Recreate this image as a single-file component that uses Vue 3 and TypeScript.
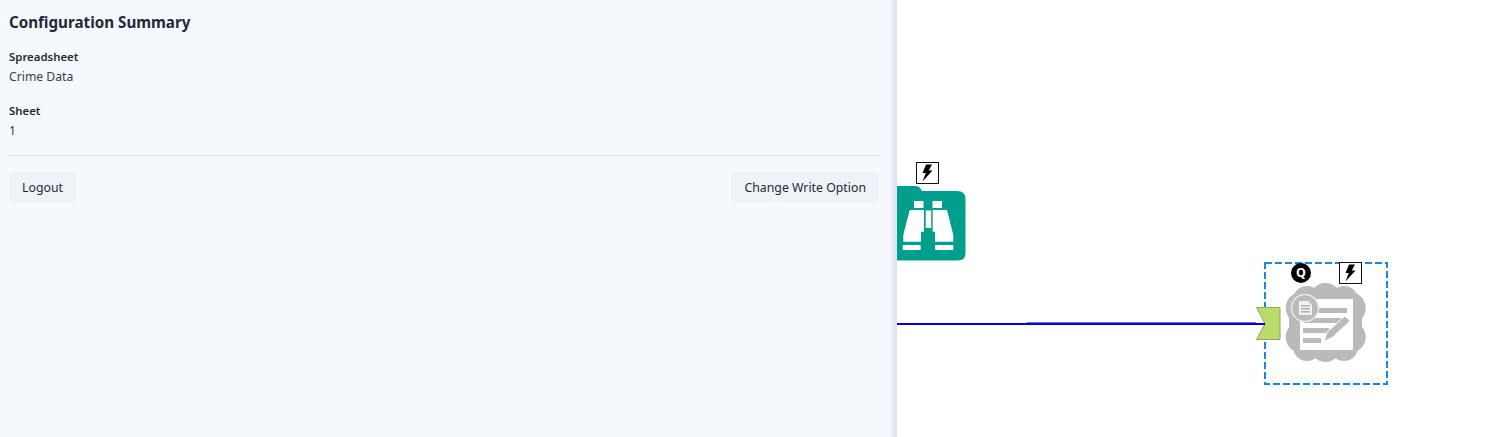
<script setup lang="ts">
const fields: { label: string; value: string }[] = [
  { label: 'Spreadsheet', value: 'Crime Data' },
  { label: 'Sheet', value: '1' },
]
</script>

<template>
  <div class="page">
    <aside class="panel">
      <h1 class="title">Configuration Summary</h1>
      <div v-for="f in fields" :key="f.label" class="field">
        <div class="label">{{ f.label }}</div>
        <div class="value">{{ f.value }}</div>
      </div>
      <hr class="rule" />
      <div class="actions">
        <button class="btn">Logout</button>
        <button class="btn">Change Write Option</button>
      </div>
    </aside>
    <div class="splitter"></div>
    <main class="canvas">
      <div class="bolt-box bolt-a">
        <svg viewBox="0 0 20 20" width="20" height="20"><path d="M9 1.500H15L11.800 7.500H15.500L5.500 18.500 8.800 10H5.500Z" fill="#000" /></svg>
      </div>

      <svg class="tool-browse" width="69" height="76" viewBox="0 0 69 76">
        <path d="M0 1H19Q22 1 23.500 3.500L25 6H60Q68.500 6 68.500 14V68Q68.500 75.500 61 75.500H0Z" fill="#009e8c" />
        <g fill="#fff">
          <rect x="17" y="16" width="9.500" height="7" />
          <rect x="35.500" y="16" width="9.500" height="7" />
          <rect x="28.700" y="25.500" width="5.500" height="17.500" />
          <path d="M12.700 25H27V46.700H24V56.700H6.300V50Z" />
          <path d="M35.700 25H50L56.300 50V56.700H38V46.700H35.700Z" />
          <rect x="5.700" y="60" width="18" height="5" rx="1" />
          <rect x="38" y="60" width="18.300" height="5" rx="1" />
        </g>
      </svg>

      <svg class="selection" width="124" height="124" viewBox="0 0 124 124">
        <rect x="1" y="1" width="122" height="121" fill="none" stroke="#1b87e0" stroke-width="2" stroke-dasharray="7 3" />
      </svg>
      <div class="q-badge">Q</div>
      <div class="bolt-box bolt-b">
        <svg viewBox="0 0 20 20" width="20" height="20"><path d="M9 1.500H15L11.800 7.500H15.500L5.500 18.500 8.800 10H5.500Z" fill="#000" /></svg>
      </div>

      <svg class="anchor" width="27" height="35" viewBox="0 0 27 35">
        <path d="M1.500 1.500H25V33.500H1.500L10 17.500Z" fill="#bcdb6a" stroke="#8fa860" stroke-width="1" stroke-linejoin="round" />
      </svg>

      <svg class="wires" width="594" height="437">
        <path d="M0 324H368" stroke="#0000e6" stroke-width="2" fill="none" />
        <path d="M130 322.500H359" stroke="#7070f0" stroke-width="1" fill="none" />
      </svg>

      <svg class="tool-cloud" width="84" height="82" viewBox="0 0 84 82">
        <g fill="#bababa">
          <circle cx="42.500" cy="17" r="16" />
          <circle cx="24" cy="18" r="14" />
          <circle cx="61" cy="18" r="14" />
          <circle cx="18.700" cy="26" r="16" />
          <circle cx="66.700" cy="26" r="16" />
          <circle cx="18.700" cy="55" r="16" />
          <circle cx="66.700" cy="55" r="16" />
          <circle cx="24" cy="65" r="14" />
          <circle cx="61" cy="65" r="14" />
          <circle cx="42.500" cy="64" r="16" />
          <rect x="6" y="15" width="73" height="50" />
        </g>
        <rect x="17" y="17" width="53" height="51" fill="#fff" />
        <g fill="#bababa">
          <rect x="32" y="26" width="32" height="5" />
          <rect x="21" y="36" width="40" height="5" />
          <rect x="20" y="46" width="26" height="5" />
          <rect x="20" y="56" width="18" height="5" />
          <path d="M41 59.500 44 50 62 34 67 39 50 55Z" stroke="#fff" stroke-width="1" />
        </g>
        <circle cx="22" cy="26" r="13.500" fill="#bababa" stroke="#e8e8e8" stroke-width="1.500" />
        <path d="M16 19H25L29 23V33H16Z" fill="#f0f0f0" />
        <g fill="#b0b0b0">
          <rect x="18" y="23" width="9" height="1.500" />
          <rect x="18" y="26" width="9" height="1.500" />
          <rect x="18" y="29" width="9" height="1.500" />
        </g>
      </svg>
    </main>
  </div>
</template>

<style scoped>
.page {
  display: flex;
  width: 1491px;
  height: 437px;
  overflow: hidden;
  background: #fff;
  font-family: "Noto Sans", "Open Sans", sans-serif;
  color: #1f2937;
}
.panel {
  width: 891px;
  flex: none;
  box-sizing: border-box;
  padding: 12px 12px 0 9px;
  background: #f5f8fd;
}
.title {
  margin: 0 0 16px;
  font-size: 15.200px;
  line-height: 20px;
  font-weight: 700;
  color: #1f2a37;
}
.field + .field {
  margin-top: 15px;
}
.label {
  font-size: 11.400px;
  line-height: 18px;
  font-weight: 600;
  color: #1f2a37;
}
.value {
  margin-top: 1px;
  font-size: 12.200px;
  line-height: 20px;
  color: #374151;
}
.rule {
  margin: 14px 0 16px;
  border: 0;
  border-top: 1px solid #e2e6ee;
}
.actions {
  display: flex;
  justify-content: space-between;
}
.btn {
  height: 30px;
  padding: 0 13px;
  border: 0;
  border-radius: 3px;
  background: #eff2f7;
  color: #1f2a37;
  font: inherit;
  font-size: 12.300px;
}
.splitter {
  width: 6px;
  flex: none;
  background: linear-gradient(to right, #e9edf5 0 3px, #dfe5f1 3px 100%);
}
.canvas {
  position: relative;
  flex: 1;
  overflow: hidden;
  background: #fff;
}
.wires {
  position: absolute;
  left: 0;
  top: 0;
}
.bolt-box {
  position: absolute;
  box-sizing: border-box;
  width: 23px;
  height: 22px;
  border: 1.500px solid #111;
  background: #fff;
}
.bolt-a { left: 19px; top: 162px; }
.bolt-b { left: 442px; top: 262px; }
.tool-browse {
  position: absolute;
  left: 0;
  top: 185px;
}
.selection {
  position: absolute;
  left: 367px;
  top: 262px;
}
.q-badge {
  position: absolute;
  left: 394px;
  top: 263px;
  width: 20px;
  height: 20px;
  border-radius: 50%;
  background: #000;
  color: #fff;
  font-size: 12.500px;
  font-weight: 700;
  line-height: 20px;
  text-align: center;
}
.anchor {
  position: absolute;
  left: 358px;
  top: 306px;
}
.tool-cloud {
  position: absolute;
  left: 386px;
  top: 282px;
}
</style>
